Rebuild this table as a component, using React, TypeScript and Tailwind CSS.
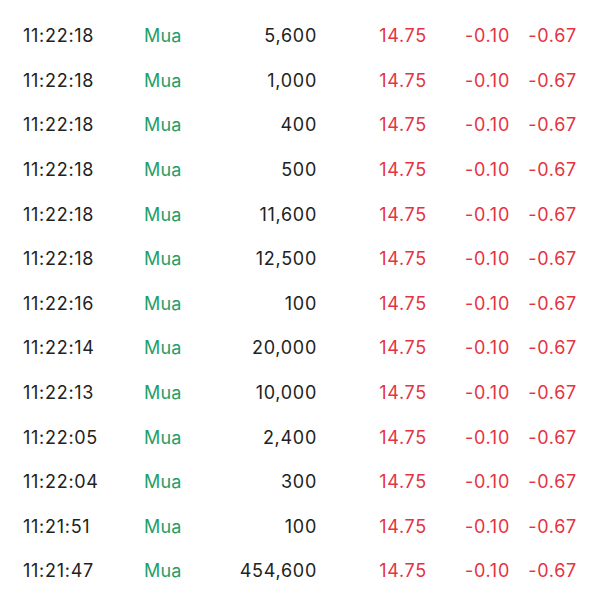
import React from "react";

const rows: [string, string][] = [
  ["11:22:18", "5,600"],
  ["11:22:18", "1,000"],
  ["11:22:18", "400"],
  ["11:22:18", "500"],
  ["11:22:18", "11,600"],
  ["11:22:18", "12,500"],
  ["11:22:16", "100"],
  ["11:22:14", "20,000"],
  ["11:22:13", "10,000"],
  ["11:22:05", "2,400"],
  ["11:22:04", "300"],
  ["11:21:51", "100"],
  ["11:21:47", "454,600"],
];

export default function App() {
  return (
    <div
      className="w-[600px] h-[600px] bg-white overflow-hidden pt-[14px] text-[18px] tracking-[0.04em]"
      style={{ fontFamily: "Inter, 'Noto Sans', sans-serif" }}
    >
      {rows.map(([t, q], i) => (
        <div key={i} className="flex items-center h-[44.6px] leading-none whitespace-nowrap">
          <div className="w-[144px] shrink-0 pl-[23px] text-[#222222]">{t}</div>
          <div className="w-[56px] shrink-0 text-[#1f9e6c] tracking-[0.01em]">Mua</div>
          <div className="w-[117px] shrink-0 text-right text-[#222222]">{q}</div>
          <div className="w-[110px] shrink-0 text-right text-[#e5333f]">14.75</div>
          <div className="w-[83px] shrink-0 text-right text-[#e5333f]">-0.10</div>
          <div className="w-[67px] shrink-0 text-right text-[#e5333f]">-0.67</div>
        </div>
      ))}
    </div>
  );
}
